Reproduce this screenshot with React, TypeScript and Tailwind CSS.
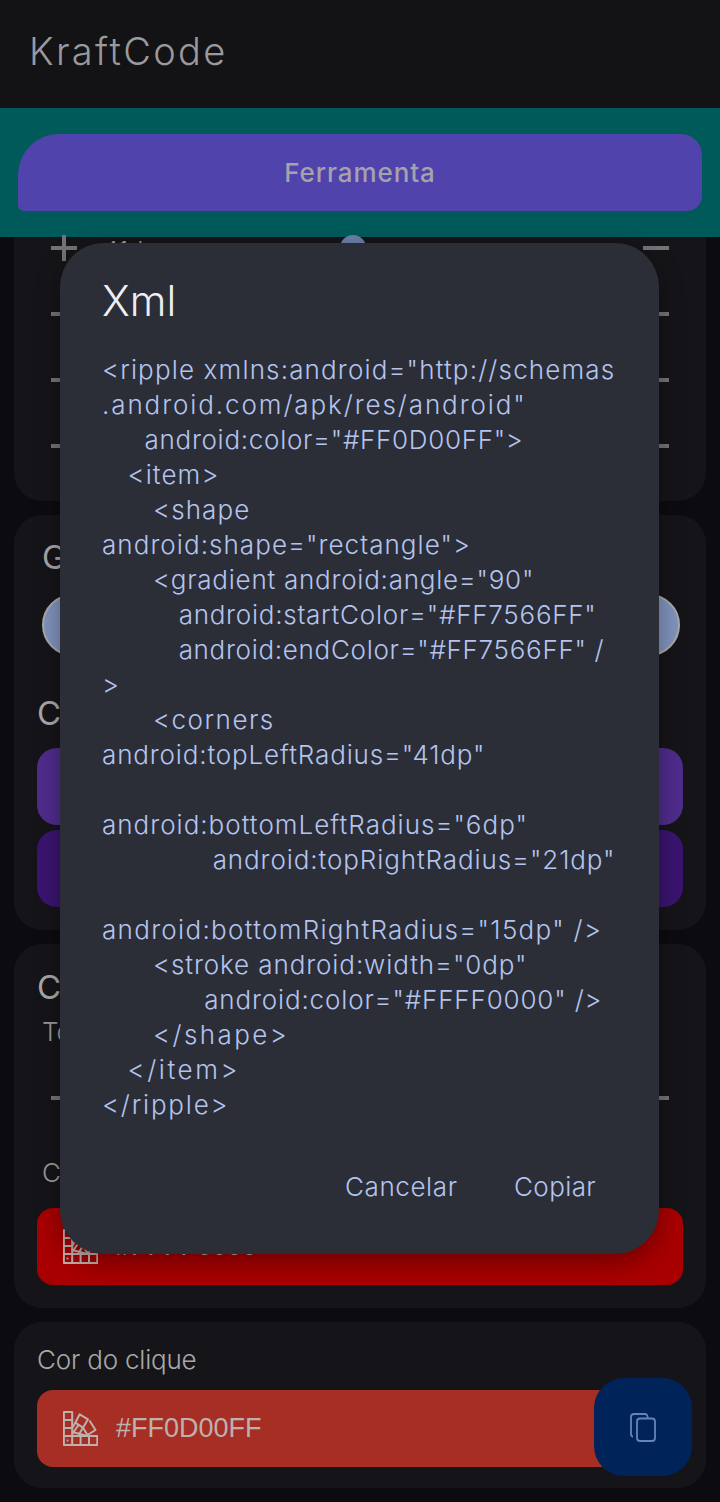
import React from "react";

const FONT = "font-['Inter','Noto_Sans',sans-serif]";

function Palette({ className }: { className?: string }) {
  return (
    <svg viewBox="0 0 35 35" className={className} fill="none" stroke="#bdb1ae" strokeWidth="2" strokeLinejoin="round">
      <rect x="0.9" y="25" width="33.4" height="9" />
      <path d="M9.2 25v9M17.6 25v9M26 25v9" />
      <rect x="0.9" y="1" width="8.3" height="8" />
      <rect x="0.9" y="9" width="8.3" height="8" />
      <rect x="0.9" y="17" width="8.3" height="8" />
      <path d="M16.7 3.3 25 8.3 20 16.7 12.3 11.7Z" />
      <path d="M26.5 9.5 32.5 19 24.5 24 20 16.7" />
      <path d="M12.3 11.7 9.2 17M20 16.7 15.5 24M9.2 23 15.5 14M9.2 21 24.5 25" />
      <rect x="3.6" y="28.6" width="1.8" height="1.8" fill="#bdb1ae" stroke="none" />
    </svg>
  );
}

function Row({ y }: { y: string }) {
  return (
    <div className={`flex items-center justify-between px-[37px] ${y}`}>
      <span className="block w-[26px] h-[4px] bg-[#747477]" />
      <span className="block w-[26px] h-[4px] bg-[#747477]" />
    </div>
  );
}

const CODE: [string, string, string][] = [
  ["", `<ripple xmlns:android="http://schemas`, "tracking-[1.15px]"],
  ["", `.android.com/apk/res/android"`, "tracking-[1.9px]"],
  ["     ", `android:color="#FF0D00FF">`, "tracking-[0.7px]"],
  ["   ", `<item>`, "tracking-[1.1px]"],
  ["      ", `<shape`, "tracking-[1.1px]"],
  ["", `android:shape="rectangle">`, "tracking-[1.05px]"],
  ["      ", `<gradient android:angle="90"`, "tracking-[0.75px]"],
  ["         ", `android:startColor="#FF7566FF"`, "tracking-[0.75px]"],
  ["         ", `android:endColor="#FF7566FF" /`, "tracking-[0.7px]"],
  ["", `>`, "tracking-[1.1px]"],
  ["      ", `<corners`, "tracking-[1.5px]"],
  ["", `android:topLeftRadius="41dp"`, "tracking-[0.85px]"],
  ["", "\u00a0", "tracking-[1.1px]"],
  ["", `android:bottomLeftRadius="6dp"`, "tracking-[1px]"],
  ["             ", `android:topRightRadius="21dp"`, "tracking-[0.9px]"],
  ["", "\u00a0", "tracking-[1.1px]"],
  ["", `android:bottomRightRadius="15dp" />`, "tracking-[1.3px]"],
  ["      ", `<stroke android:width="0dp"`, "tracking-[0.9px]"],
  ["            ", `android:color="#FFFF0000" />`, "tracking-[0.85px]"],
  ["      ", `</shape>`, "tracking-[2.4px]"],
  ["   ", `</item>`, "tracking-[2.6px]"],
  ["", `</ripple>`, "tracking-[1.8px]"],
];

export default function App() {
  return (
    <div className={`relative w-[720px] h-[1502px] overflow-hidden bg-[#0c0c10] ${FONT}`}>
      <header className="h-[108px] bg-[#131316] flex items-center pl-[29px]">
        <h1 className="text-[38px] font-light text-[#9a9a9c] tracking-[2.3px] leading-none -mt-[7px]">KraftCode</h1>
      </header>
      <div className="h-[129px] bg-[#005a5a] pt-[26px] px-[18px]">
        <button className="w-full h-[77px] bg-[#5043ac] rounded-tl-[41px] rounded-bl-[6px] rounded-tr-[21px] rounded-br-[15px] text-[26px] font-medium tracking-[0.9px] text-[#a5a2ac]">
          Ferramenta
        </button>
      </div>

      <main className="flex flex-col gap-[14px] px-[14px]">
        <section className="relative h-[264px] bg-[#151519] rounded-b-[28px] pt-[9px] flex flex-col">
          <span className="absolute left-[89px] top-[-1px] text-[25px] leading-[30px] font-light text-[#9a9a9c]">41dp</span>
          <div className="relative flex items-center justify-between px-[37px] h-[4px]">
            <span className="relative block w-[26px] h-[4px] bg-[#747477]">
              <span className="absolute left-[11px] -top-[11px] w-[4px] h-[26px] bg-[#747477]" />
            </span>
            <span className="absolute left-[326px] -top-[11px] w-[26px] h-[26px] rounded-full bg-[#6b7fa8]" />
            <span className="block w-[26px] h-[4px] bg-[#747477]" />
          </div>
          <Row y="mt-[62px]" />
          <Row y="mt-[62px]" />
          <Row y="mt-[62px]" />
        </section>

        <section className="h-[415px] bg-[#151519] rounded-[28px] relative">
          <h2 className="absolute left-[28px] top-[22px] text-[33px] leading-[40px] text-[#a8a8aa]">G</h2>
          <div className="absolute left-[28px] right-[26px] top-[79px] h-[62px] rounded-full bg-[#8093bd] border-2 border-[#a9a9ad]" />
          <h2 className="absolute left-[23px] top-[178px] text-[33px] leading-[40px] text-[#a8a8aa]">Cu</h2>
          <div className="absolute left-[23px] right-[23px] top-[233px] h-[77px] rounded-[20px] bg-[#4f2c8c]" />
          <div className="absolute left-[23px] right-[23px] top-[315px] h-[77px] rounded-[20px] bg-[#3a1470]" />
        </section>

        <section className="h-[364px] bg-[#151519] rounded-[28px] relative">
          <h2 className="absolute left-[23px] top-[23px] text-[33px] leading-[40px] text-[#a8a8aa]">Co</h2>
          <p className="absolute left-[28px] top-[72px] text-[26px] font-light leading-[32px] text-[#9a9a9c]">To</p>
          <div className="absolute left-[37px] right-[37px] top-[152px] flex justify-between">
            <span className="block w-[26px] h-[4px] bg-[#747477]" />
            <span className="block w-[26px] h-[4px] bg-[#747477]" />
          </div>
          <p className="absolute left-[28px] top-[213px] text-[26px] font-light leading-[32px] text-[#9a9a9c]">Co</p>
          <div className="absolute left-[23px] right-[23px] top-[264px] h-[77px] rounded-[16px] bg-[#a80000] flex items-center pl-[26px] gap-[18px]">
            <Palette className="w-[35px] h-[35px]" />
            <span className="text-[27px] font-['Liberation_Sans',sans-serif] text-[#bdb1ae]">#FFFF0000</span>
          </div>
        </section>

        <section className="h-[166px] bg-[#151519] rounded-[28px] px-[23px] pt-[20px]">
          <h3 className="text-[26px] font-light text-[#a8a8aa] leading-[36px] tracking-[-0.2px]">Cor do clique</h3>
          <div className="mt-[12px] h-[77px] rounded-[16px] bg-[#a62e25] flex items-center pl-[26px] gap-[18px]">
            <Palette className="w-[35px] h-[35px]" />
            <span className="text-[27px] font-['Liberation_Sans',sans-serif] text-[#bdb1ae]">#FF0D00FF</span>
          </div>
        </section>
      </main>

      <button className="absolute left-[594px] top-[1378px] w-[98px] h-[98px] rounded-[30px] bg-[#002359] flex items-center justify-center">
        <svg viewBox="0 0 26 29" className="w-[26px] h-[29px]" fill="none" stroke="#6683ba" strokeWidth="1.8">
          <rect x="7" y="5.5" width="18" height="22.5" rx="3" />
          <path d="M3 23.5a2 2 0 0 1-2-2V4a3 3 0 0 1 3-3h11a3 3 0 0 1 2.5 4" />
        </svg>
      </button>

      <div className="absolute left-[60px] top-[243px] w-[599px] h-[1011px] rounded-[44px] bg-[#2b2e37] shadow-[0_8px_24px_rgba(0,0,0,0.35)] pl-[42px] pr-[40px]">
        <h2 className="text-[42px] font-light text-[#eeeef2] leading-[56px] mt-[30px]">Xml</h2>
        <div className="mt-[23px] text-[26px] leading-[35px] text-[#b4c4ee] font-light whitespace-pre">
          {CODE.map(([indent, text, track], i) => (
            <div key={i}>
              <span className="tracking-[1.2px]">{indent}</span>
              <span className={track}>{text}</span>
            </div>
          ))}
        </div>
        <div className="absolute left-[285px] top-[926px] text-[26px] tracking-[0.6px] text-[#b4c4ee] font-light leading-[35px]">Cancelar</div>
        <div className="absolute left-[454px] top-[926px] text-[26px] tracking-[0.4px] text-[#b4c4ee] font-light leading-[35px]">Copiar</div>
      </div>
    </div>
  );
}
